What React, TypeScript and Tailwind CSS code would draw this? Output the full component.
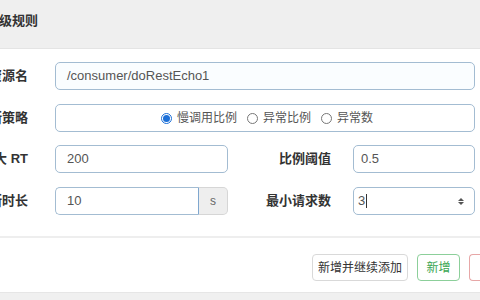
import React from "react";

const cjk = { fontFamily: '"Liberation Sans", "Noto Sans CJK SC", sans-serif' };

function Label({ w, children }: { w: string; children: React.ReactNode }) {
  return (
    <div className={`${w} shrink-0 flex justify-end whitespace-nowrap text-[13px] font-bold text-[#333]`}>
      <span>{children}</span>
    </div>
  );
}

function Radio({ checked, label }: { checked?: boolean; label: string }) {
  return (
    <div className="flex items-center gap-[5px]">
      {checked ? (
        <span className="w-[11px] h-[11px] rounded-full border border-[#1b6fd8] flex items-center justify-center bg-white">
          <span className="w-[7px] h-[7px] rounded-full bg-[#1b6fd8]" />
        </span>
      ) : (
        <span className="w-[11px] h-[11px] rounded-full border border-[#777] bg-white" />
      )}
      <span className="text-[12px] text-[#555]">{label}</span>
    </div>
  );
}

export default function App() {
  return (
    <div className="w-[480px] h-[300px] overflow-hidden bg-white flex flex-col" style={cjk}>
      <div className="h-[49px] shrink-0 bg-[#efefef] border-b border-[#e4e4e4] flex items-center overflow-hidden">
        <span className="ml-[-40px] mb-[6px] whitespace-nowrap text-[13px] font-bold text-[#333]">新增降级规则</span>
      </div>

      <div className="flex flex-col">
        <div className="mt-[13px] flex items-center h-[28px]">
          <Label w="w-[28px]">资源名</Label>
          <div className="ml-[27px] w-[420px] h-[28px] rounded-[5px] border border-[#a3bcd2] bg-[#fafdff] flex items-center pl-[11px] text-[13px] text-[#555]">
            /consumer/doRestEcho1
          </div>
        </div>

        <div className="mt-[14px] flex items-center h-[28px]">
          <Label w="w-[28px]">熔断策略</Label>
          <div className="ml-[27px] w-[420px] h-[28px] rounded-[5px] border border-[#a3bcd2] bg-white flex items-center justify-center gap-[10px] pl-[4px]">
            <Radio checked label="慢调用比例" />
            <Radio label="异常比例" />
            <Radio label="异常数" />
          </div>
        </div>

        <div className="mt-[13px] flex items-center h-[28px]">
          <Label w="w-[28px]">最大 RT</Label>
          <div className="ml-[27px] w-[173px] h-[28px] rounded-[5px] border border-[#a3bcd2] bg-white flex items-center pl-[11px] text-[13px] text-[#555]">
            200
          </div>
          <Label w="w-[103px]">比例阈值</Label>
          <div className="ml-[22px] w-[122px] h-[28px] rounded-[5px] border border-[#a3bcd2] bg-white flex items-center pl-[7px] text-[13px] text-[#555]">
            0.5
          </div>
        </div>

        <div className="mt-[14px] flex items-center h-[28px]">
          <Label w="w-[28px]">熔断时长</Label>
          <div className="ml-[27px] flex h-[28px]">
            <div className="w-[144px] h-[28px] rounded-l-[5px] border border-[#a3bcd2] border-r-[#7fa7cf] bg-white flex items-center pl-[11px] text-[13px] text-[#555]">
              10
            </div>
            <div className="w-[29px] h-[28px] rounded-r-[5px] border border-l-0 border-[#d6d6d6] bg-[#eeeeee] flex items-center justify-center text-[12px] text-[#666]">
              s
            </div>
          </div>
          <Label w="w-[103px]">最小请求数</Label>
          <div className="ml-[22px] w-[122px] h-[28px] rounded-[5px] border border-[#a3bcd2] bg-white flex items-center pl-[4px] pr-[10px] text-[13px] text-[#555]">
            <span>3</span>
            <span className="w-[1px] h-[14px] bg-[#333] ml-[1px]" />
            <div className="ml-auto flex flex-col items-center gap-[1px]">
              <span className="w-0 h-0 border-l-[3px] border-r-[3px] border-b-[3px] border-l-transparent border-r-transparent border-b-[#555]" />
              <span className="w-0 h-0 border-l-[3px] border-r-[3px] border-t-[3px] border-l-transparent border-r-transparent border-t-[#555]" />
            </div>
          </div>
        </div>
      </div>

      <div className="mt-[21px] border-t-2 border-[#eeeeee] flex justify-end items-start gap-[9px] pt-[16px] h-[56px] shrink-0 pr-0 overflow-hidden">
        <div className="w-[96px] h-[27px] shrink-0 rounded-[4px] border border-[#d9d9d9] bg-white flex items-center justify-center text-[12px] text-[#333]">
          新增并继续添加
        </div>
        <div className="w-[43px] h-[27px] shrink-0 rounded-[4px] border border-[#8ccf9a] bg-white flex items-center justify-center text-[12px] text-[#3aa552]">
          新增
        </div>
        <div className="w-[11px] h-[27px] shrink-0 rounded-l-[4px] border border-r-0 border-[#e7a7a7] bg-white" />
      </div>

      <div className="flex-1 border-t border-[#e6e6e6] bg-[#f0f0f0]" />
    </div>
  );
}
